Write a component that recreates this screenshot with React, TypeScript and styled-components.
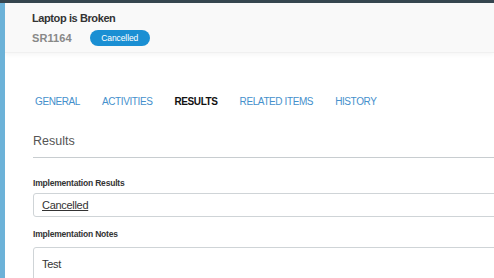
import styled, { createGlobalStyle } from 'styled-components';

const GlobalStyle = createGlobalStyle`
  html, body {
    margin: 0;
    padding: 0;
    background: #ffffff;
    overflow: hidden;
  }
  body {
    font-family: 'Liberation Sans', Arial, sans-serif;
  }
`;

const tabs = ['GENERAL', 'ACTIVITIES', 'RESULTS', 'RELATED ITEMS', 'HISTORY'];

export default function App() {
  return (
    <>
      <GlobalStyle />
      <Page>
        <TopBar />
        <Body>
          <SideStrip />
          <Main>
            <Header>
              <Title>Laptop is Broken</Title>
              <SubRow>
                <Ticket>SR1164</Ticket>
                <Badge>Cancelled</Badge>
              </SubRow>
            </Header>
            <Content>
              <Tabs>
                {tabs.map((t) => (
                  <Tab key={t} active={t === 'RESULTS'}>
                    {t}
                  </Tab>
                ))}
              </Tabs>
              <SectionTitle>Results</SectionTitle>
              <Field>
                <Label>Implementation Results</Label>
                <Box>
                  <LinkValue>Cancelled</LinkValue>
                </Box>
              </Field>
              <Field>
                <Label spaced>Implementation Notes</Label>
                <Box tall>Test</Box>
              </Field>
            </Content>
          </Main>
        </Body>
      </Page>
    </>
  );
}

const Page = styled.div`
  width: 494px;
  height: 278px;
  display: flex;
  flex-direction: column;
  overflow: hidden;
`;

const TopBar = styled.div`
  height: 3px;
  background: #36464f;
  flex-shrink: 0;
`;

const Body = styled.div`
  flex: 1;
  display: flex;
  min-height: 0;
`;

const SideStrip = styled.div`
  width: 5px;
  background: #6cb2d8;
  flex-shrink: 0;
`;

const Main = styled.div`
  flex: 1;
  display: flex;
  flex-direction: column;
  min-width: 0;
  overflow: hidden;
`;

const Header = styled.div`
  flex-shrink: 0;
  height: 50px;
  box-sizing: border-box;
  padding: 8px 0 0 27px;
  background: #f9f9f9;
  border-bottom: 1px solid #f0f0f0;
  box-shadow: 0 2px 4px rgba(0, 0, 0, 0.04);
`;

const Title = styled.div`
  font-size: 11px;
  font-weight: bold;
  color: #333;
  line-height: 14px;
  letter-spacing: -0.4px;
`;

const SubRow = styled.div`
  display: flex;
  align-items: center;
  gap: 18px;
  margin-top: 5px;
`;

const Ticket = styled.span`
  font-size: 11px;
  font-weight: bold;
  color: #888;
  letter-spacing: 0.1px;
`;

const Badge = styled.span`
  display: inline-flex;
  align-items: center;
  justify-content: center;
  width: 60px;
  height: 16px;
  border-radius: 8px;
  background: #1a8fd3;
  color: #fff;
  font-size: 8.5px;
  letter-spacing: -0.1px;
`;

const Content = styled.div`
  flex-shrink: 0;
  padding: 0 0 0 28px;
  width: 620px;
`;

const Tabs = styled.div`
  display: flex;
  gap: 22px;
  padding: 42px 0 0 2px;
  height: 13px;
  align-items: center;
`;

const Tab = styled.span<{ active?: boolean }>`
  font-size: 10px;
  letter-spacing: -0.4px;
  color: ${(p) => (p.active ? '#111' : '#4590cc')};
  font-weight: ${(p) => (p.active ? 'bold' : 'normal')};
  white-space: nowrap;
`;

const SectionTitle = styled.div`
  margin-top: 26px;
  padding-bottom: 9px;
  font-size: 12.5px;
  line-height: 14px;
  color: #555;
  border-bottom: 1px solid #c8cdd0;
`;

const Field = styled.div`
  display: flex;
  flex-direction: column;
  margin-top: 20px;
  & + & {
    margin-top: 12px;
  }
`;

const Label = styled.div<{ spaced?: boolean }>`
  font-size: 8.5px;
  line-height: 10px;
  font-weight: bold;
  color: #333;
  letter-spacing: -0.2px;
  margin-bottom: ${(p) => (p.spaced ? '8px' : '5px')};
`;

const Box = styled.div<{ tall?: boolean }>`
  height: ${(p) => (p.tall ? '40px' : '24px')};
  box-sizing: border-box;
  border: 1px solid #cfd4d7;
  border-radius: 3px;
  padding: ${(p) => (p.tall ? '10px 8px' : '0 8px')};
  display: flex;
  align-items: ${(p) => (p.tall ? 'flex-start' : 'center')};
  font-size: 11px;
  letter-spacing: -0.3px;
  color: #333;
`;

const LinkValue = styled.span`
  text-decoration: underline;
  color: #333;
`;
